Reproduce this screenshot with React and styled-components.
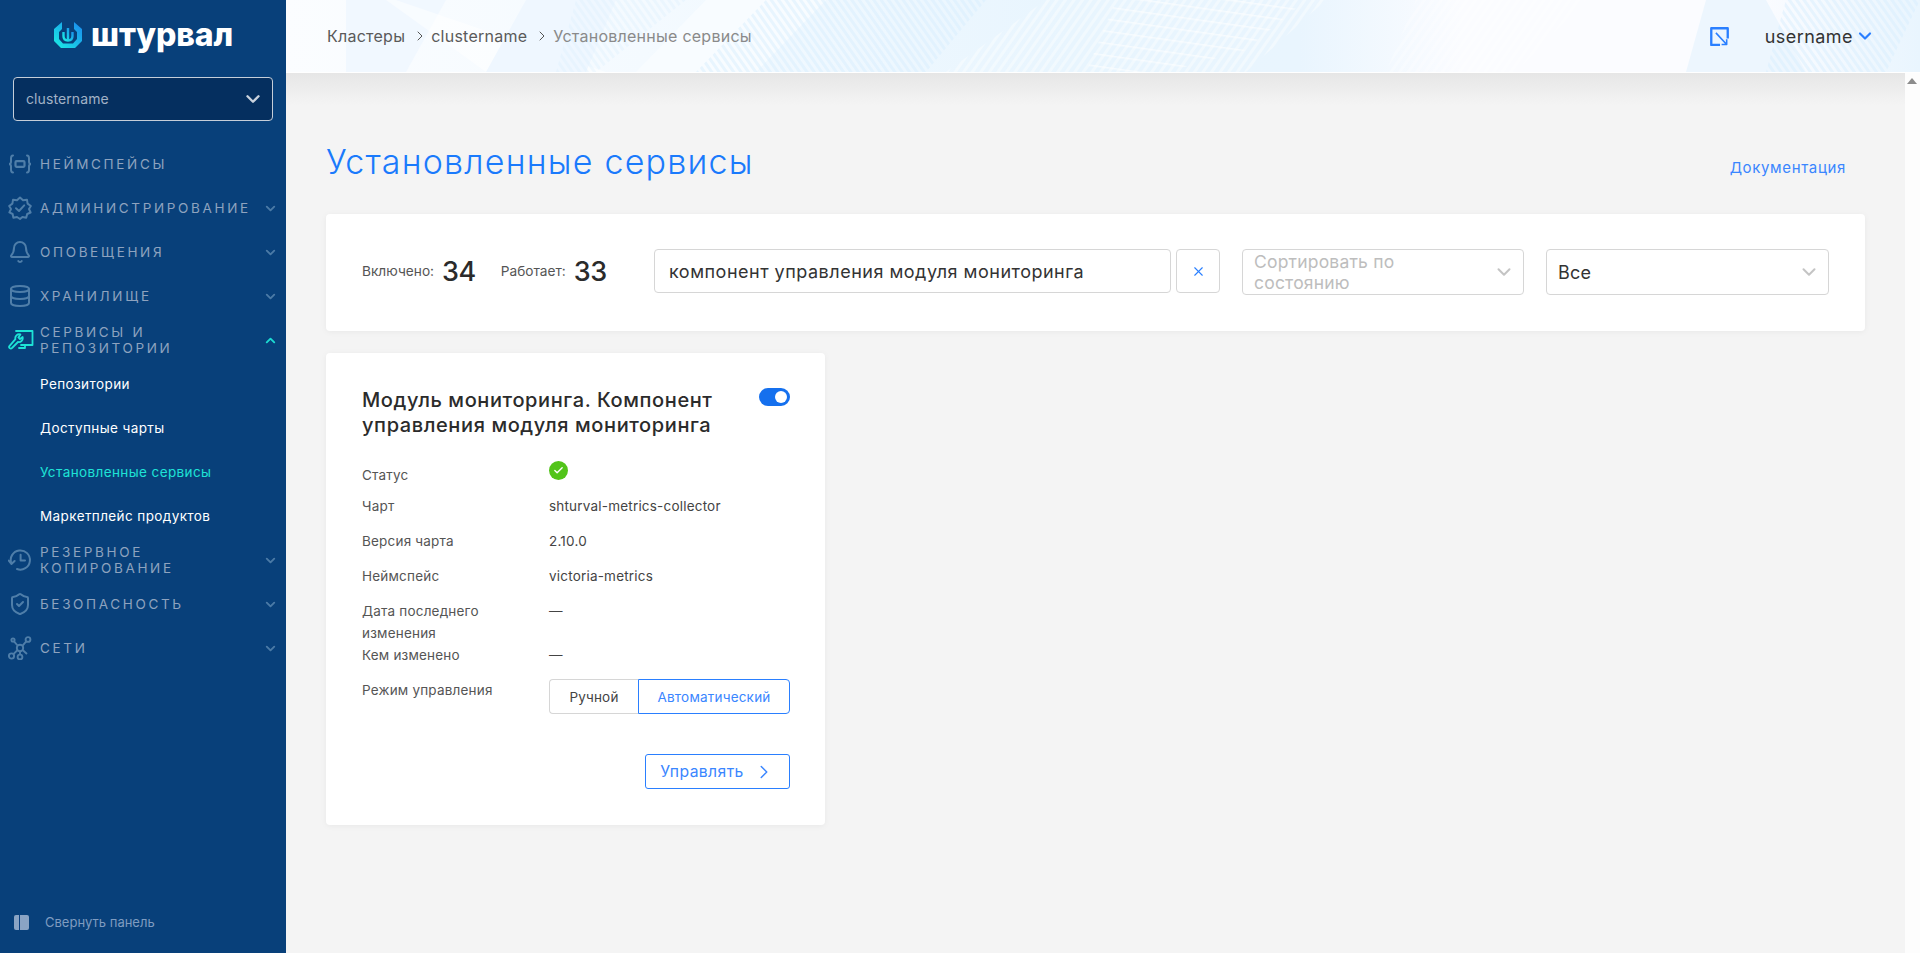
import React from 'react'
import styled, { createGlobalStyle } from 'styled-components'
import { Bell, ChevronDown, ChevronRight, ChevronUp, Database, ShieldCheck, X, Check } from 'lucide-react'

const GlobalStyle = createGlobalStyle`
    html, body {
        margin: 0;
        height: 100%;
        background: #f4f4f4;
    }
    body {
        font-family: Inter, "Noto Sans", "Liberation Sans", sans-serif;
        color: #2b2b2b;
    }
    * {
        box-sizing: border-box;
    }
`

const LogoIcon = () => (
    <svg width="28" height="26" viewBox="0 0 28 26">
        <defs>
            <linearGradient id="logoGrad" x1="1" y1="0" x2="0" y2="1">
                <stop offset="0" stopColor="#1a86ee" />
                <stop offset="1" stopColor="#1af0e4" />
            </linearGradient>
        </defs>
        <path
            fill="url(#logoGrad)"
            d="M8 0 L0 7 V19 L7 26 H21 L28 19 V7 L20 0 V7 L23 10 V17 L19 21.5 H9 L5 17 V10 L8 7 Z"
        />
        <path
            fill="none"
            stroke="url(#logoGrad)"
            strokeWidth="2.4"
            d="M9.5 10 V14 Q9.5 18.5 14 18.5 Q18.5 18.5 18.5 14 V10 M14 6 V18"
        />
    </svg>
)

const NamespaceIcon = () => (
    <svg width="24" height="24" viewBox="0 0 24 24" fill="none" stroke="currentColor" strokeWidth="2" strokeLinecap="round">
        <path d="M5 3.5 C3 3.5 3 5 3 6.5 V9.5 C3 11 2.4 12 1 12 C2.4 12 3 13 3 14.5 V17.5 C3 19 3 20.5 5 20.5" />
        <path d="M19 3.5 C21 3.5 21 5 21 6.5 V9.5 C21 11 21.6 12 23 12 C21.6 12 21 13 21 14.5 V17.5 C21 19 21 20.5 19 20.5" />
        <rect x="7.5" y="9.2" width="9" height="5.6" rx="1" strokeWidth="2.2" />
    </svg>
)

const GearCheckIcon = () => (
    <svg width="24" height="24" viewBox="0 0 24 24" fill="none" stroke="currentColor" strokeWidth="2" strokeLinejoin="round" strokeLinecap="round">
        <path d="M12 1.5 L15 4.2 L19 3.8 L19.6 7.6 L22.8 10 L21 13 L22.6 16.5 L19.2 18 L18.2 21.8 L14.4 21 L12 23 L9 21 L5.4 21.8 L4.6 18 L1.4 16.4 L3 13 L1.2 10 L4.4 7.6 L5 3.8 L9 4.2 Z" />
        <path d="M8 12.2 L11 15 L16.2 9.4" />
    </svg>
)

const ServicesIcon = () => (
    <svg width="26" height="24" viewBox="0 0 26 24" fill="none" stroke="currentColor" strokeWidth="1.8" strokeLinejoin="round" strokeLinecap="round">
        <path d="M8 3 H24.5 V17 H13" />
        <path d="M17 17 V20 H11" />
        <path d="M12.4 6.4 A4 4 0 0 0 7.4 11.2 L1.6 17.8 A1.6 1.6 0 0 0 4 20 L10 14 A4 4 0 0 0 14.6 9 L12 11 L10.4 9.4 Z" />
    </svg>
)

const BackupIcon = () => (
    <svg width="24" height="24" viewBox="0 0 24 24" fill="none" stroke="currentColor" strokeWidth="2" strokeLinecap="round" strokeLinejoin="round">
        <path d="M3.4 15.5 A9.6 9.6 0 1 1 9 21" />
        <path d="M0.8 12.6 L3.4 16 L6.6 13" />
        <path d="M12.6 6.8 V12.4 H17" />
    </svg>
)

const NetworkIcon = () => (
    <svg width="24" height="24" viewBox="0 0 24 24" fill="none" stroke="currentColor" strokeWidth="1.9">
        <circle cx="12" cy="12" r="3.2" />
        <circle cx="5" cy="4" r="1.6" />
        <circle cx="20" cy="3.5" r="2.4" />
        <circle cx="3.5" cy="20" r="2.6" />
        <circle cx="12" cy="21" r="2.4" />
        <path d="M6 5.4 L10 10 M18.4 5.2 L14.4 9.8 M9.6 14 L5.4 18.2 M12 15.2 V18.6 M14.6 14 L19 18" />
    </svg>
)

const LeaveIcon = () => (
    <svg width="19" height="19" viewBox="0 0 18 18" fill="none" stroke="#2a7fff" strokeLinejoin="round">
        <path d="M9.5 17 H1.2 V1.2 H16.8 V11" strokeWidth="2.2" />
        <path d="M5.6 5.6 L15.8 16.6 M15.8 11.6 V16.6 H11" strokeWidth="1.5" />
    </svg>
)

const navItems = [
    { title: 'Неймспейсы', icon: <NamespaceIcon /> },
    { title: 'Администрирование', icon: <GearCheckIcon />, arrow: true },
    { title: 'Оповещения', icon: <Bell size={24} strokeWidth={2} />, arrow: true },
    { title: 'Хранилище', icon: <Database size={24} strokeWidth={2} />, arrow: true },
    {
        title: 'Сервисы и репозитории',
        icon: <ServicesIcon />,
        open: true,
        arrow: true,
        children: ['Репозитории', 'Доступные чарты', 'Установленные сервисы', 'Маркетплейс продуктов'],
    },
    { title: 'Резервное копирование', icon: <BackupIcon />, arrow: true },
    { title: 'Безопасность', icon: <ShieldCheck size={24} strokeWidth={2} />, arrow: true },
    { title: 'Сети', icon: <NetworkIcon />, arrow: true },
]

const infoRows = [
    { label: 'Чарт', value: 'shturval-metrics-collector', gap: 13 },
    { label: 'Версия чарта', value: '2.10.0', gap: 13 },
    { label: 'Неймспейс', value: 'victoria-metrics', gap: 13 },
    { label: 'Дата последнего изменения', value: '—', gap: 0 },
    { label: 'Кем изменено', value: '—', gap: 13 },
]

const App = () => {
    return (
        <Layout>
            <GlobalStyle />
            <Sidebar>
                <LogoRow>
                    <LogoIcon />
                    <LogoText>штурвал</LogoText>
                </LogoRow>
                <ClusterSelect>
                    <ClusterName>clustername</ClusterName>
                    <ChevronDown size={22} strokeWidth={2.6} color="#c9d2dd" />
                </ClusterSelect>
                <Nav>
                    {navItems.map((item) => (
                        <React.Fragment key={item.title}>
                            <NavRow $open={item.open}>
                                <NavIcon>{item.icon}</NavIcon>
                                <NavLabel>{item.title}</NavLabel>
                                {item.arrow && (
                                    <NavArrow>
                                        {item.open ? (
                                            <ChevronUp size={15} strokeWidth={3} />
                                        ) : (
                                            <ChevronDown size={15} strokeWidth={3} />
                                        )}
                                    </NavArrow>
                                )}
                            </NavRow>
                            {item.children &&
                                item.children.map((child) => (
                                    <SubRow key={child} $active={child === 'Установленные сервисы'}>
                                        {child}
                                    </SubRow>
                                ))}
                        </React.Fragment>
                    ))}
                </Nav>
                <Collapse>
                    <CollapseIcon />
                    Свернуть панель
                </Collapse>
            </Sidebar>

            <Main>
                <Header>
                    <HeaderPattern viewBox="0 0 1634 72" preserveAspectRatio="none">
                        <defs>
                            <pattern id="stripes" width="7" height="7" patternUnits="userSpaceOnUse" patternTransform="rotate(35)">
                                <rect width="3" height="7" fill="#ffffff" opacity="0.4" />
                            </pattern>
                            <pattern id="stripesBlue" width="6" height="6" patternUnits="userSpaceOnUse" patternTransform="rotate(-35)">
                                <rect width="3" height="6" fill="#d8edfd" opacity="0.5" />
                            </pattern>
                            <pattern id="steps" width="60" height="12" patternUnits="userSpaceOnUse" patternTransform="rotate(8)">
                                <rect width="60" height="1.5" fill="#ffffff" opacity="0.6" />
                            </pattern>
                        </defs>
                        <polygon points="60,0 160,0 120,72 60,72" fill="#f1f8ff" />
                        <polygon points="100,0 110,0 320,72 200,72" fill="#ffffff" opacity="0.5" />
                        <polygon points="240,0 330,0 300,72 200,72" fill="#eff7ff" />
                        <polygon points="290,0 400,0 310,72 270,72" fill="url(#stripesBlue)" opacity="0.6" />
                        <polygon points="420,0 540,0 470,72 350,72" fill="#f8fcff" />
                        <polygon points="480,0 700,0 640,72 410,72" fill="url(#stripesBlue)" />
                        <polygon points="760,0 1040,0 960,72 660,72" fill="url(#stripes)" />
                        <polygon points="830,0 1020,0 960,50 880,72 800,72" fill="url(#steps)" />
                        <polygon points="1130,0 1300,0 1230,72 1100,72" fill="url(#stripes)" opacity="0.7" />
                        <polygon points="1420,0 1480,0 1520,72 1400,72" fill="#edf6fe" />
                        <polygon points="1500,0 1634,0 1600,72 1480,72" fill="url(#stripesBlue)" />
                    </HeaderPattern>
                    <Breadcrumbs>
                        <Crumb>Кластеры</Crumb>
                        <CrumbArrow size={16} strokeWidth={1.5} />
                        <Crumb>clustername</Crumb>
                        <CrumbArrow size={16} strokeWidth={1.5} />
                        <Crumb $current>Установленные сервисы</Crumb>
                    </Breadcrumbs>
                    <HeaderRight>
                        <LeaveIcon />
                        <UserName>
                            username
                            <ChevronDown size={20} strokeWidth={2.6} color="#2a7fff" />
                        </UserName>
                    </HeaderRight>
                </Header>

                <Body>
                    <Content>
                        <TitleRow>
                            <PageTitle>Установленные сервисы</PageTitle>
                            <DocLink>Документация</DocLink>
                        </TitleRow>

                        <FilterCard>
                            <Stats>
                                <StatLabel>Включено:</StatLabel>
                                <StatValue>34</StatValue>
                                <StatLabel>Работает:</StatLabel>
                                <StatValue>33</StatValue>
                            </Stats>
                            <SearchField>компонент управления модуля мониторинга</SearchField>
                            <ClearButton>
                                <X size={15} strokeWidth={1.8} />
                            </ClearButton>
                            <SelectBox $placeholder $width={282}>
                                <SelectText $placeholder>Сортировать по состоянию</SelectText>
                                <ChevronDown size={22} strokeWidth={2.2} color="#c4c4c4" />
                            </SelectBox>
                            <SelectBox $width={283}>
                                <SelectText>Все</SelectText>
                                <ChevronDown size={22} strokeWidth={2.2} color="#c4c4c4" />
                            </SelectBox>
                        </FilterCard>

                        <ServiceCard>
                            <CardTop>
                                <CardTitle>Модуль мониторинга. Компонент управления модуля мониторинга</CardTitle>
                                <Toggle />
                            </CardTop>
                            <InfoRow $gap={9}>
                                <InfoLabel $shift>Статус</InfoLabel>
                                <StatusDot>
                                    <Check size={11} strokeWidth={3} color="#ffffff" />
                                </StatusDot>
                            </InfoRow>
                            {infoRows.map((row) => (
                                <InfoRow key={row.label} $gap={row.gap}>
                                    <InfoLabel>{row.label}</InfoLabel>
                                    <InfoValue>{row.value}</InfoValue>
                                </InfoRow>
                            ))}
                            <InfoRow $gap={0}>
                                <InfoLabel>Режим управления</InfoLabel>
                                <ModeGroup>
                                    <ModeButton>Ручной</ModeButton>
                                    <ModeButton $active>Автоматический</ModeButton>
                                </ModeGroup>
                            </InfoRow>
                            <CardFooter>
                                <ManageButton>
                                    Управлять
                                    <ChevronRight size={22} strokeWidth={1.6} />
                                </ManageButton>
                            </CardFooter>
                        </ServiceCard>
                    </Content>
                    <ScrollTrack>
                        <ScrollArrow />
                    </ScrollTrack>
                </Body>
            </Main>
        </Layout>
    )
}

export default App

const Layout = styled.div`
    display: flex;
    height: 100vh;
    overflow: hidden;
`

const Sidebar = styled.aside`
    width: 286px;
    flex: none;
    display: flex;
    flex-direction: column;
    background: #08407a;
`

const LogoRow = styled.div`
    height: 77px;
    padding: 22px 0 0 54px;
    display: flex;
    align-items: flex-start;
    gap: 9px;
`

const LogoText = styled.div`
    color: #ffffff;
    font-size: 32px;
    line-height: 25px;
    font-weight: 800;
    letter-spacing: -0.1px;
`

const ClusterSelect = styled.div`
    margin-left: 13px;
    width: 260px;
    height: 44px;
    flex: none;
    padding: 0 8px 0 12px;
    display: flex;
    align-items: center;
    justify-content: space-between;
    background: #052f5f;
    border: 1px solid #c5ced9;
    border-radius: 4px;
`

const ClusterName = styled.span`
    padding-bottom: 2px;
    font-size: 14px;
    letter-spacing: 0.1px;
    color: #a2b2c6;
`

const Nav = styled.nav`
    margin-top: 21px;
    display: flex;
    flex-direction: column;
`

const NavRow = styled.div`
    height: 44px;
    display: flex;
    align-items: center;
    padding: 0 8px;
    color: ${(props) => (props.$open ? '#1ee3d6' : '#4f7ea9')};
`

const NavIcon = styled.span`
    width: 32px;
    flex: none;
    display: flex;
`

const NavLabel = styled.span`
    flex: 1;
    max-width: 220px;
    font-size: 13.5px;
    line-height: 16px;
    letter-spacing: 2.65px;
    text-transform: uppercase;
    color: #8ea3bf;
`

const NavArrow = styled.span`
    margin-left: auto;
    display: flex;
    opacity: 0.95;
`

const SubRow = styled.div`
    height: 44px;
    padding-left: 40px;
    display: flex;
    align-items: center;
    font-size: 13.5px;
    font-weight: 400;
    letter-spacing: 0.4px;
    color: ${(props) => (props.$active ? '#1ee3d6' : '#ffffff')};
`

const Collapse = styled.div`
    margin-top: auto;
    height: 62px;
    padding-left: 14px;
    display: flex;
    align-items: center;
    gap: 16px;
    font-size: 13px;
    color: #7f9cc0;
`

const CollapseIcon = styled.span`
    width: 15px;
    height: 15px;
    flex: none;
    border-radius: 2px;
    background: linear-gradient(90deg, #8aa4c4 0 5px, #0b4080 5px 6.5px, #8aa4c4 6.5px);
`

const Main = styled.main`
    flex: 1;
    min-width: 0;
    display: flex;
    flex-direction: column;
`

const Header = styled.header`
    position: relative;
    height: 73px;
    flex: none;
    padding: 0 45px 0 41px;
    display: flex;
    align-items: center;
    justify-content: space-between;
    border-bottom: 1px solid #ffffff;
    background: linear-gradient(90deg, #fbfdff 0%, #f4faff 22%, #e8f5fe 48%, #e9f5fe 62%, #fbfcff 72%, #fbfcff 90%, #e9f5fe 100%);
`

const HeaderPattern = styled.svg`
    position: absolute;
    inset: 0;
    width: 100%;
    height: 72px;
`

const Breadcrumbs = styled.div`
    position: relative;
    display: flex;
    align-items: center;
    gap: 3px;
    font-size: 16px;
    letter-spacing: 0.25px;
`

const Crumb = styled.span`
    color: ${(props) => (props.$current ? '#8a8a8a' : '#5a5a5a')};
`

const CrumbArrow = styled(ChevronRight)`
    margin-left: 4px;
    color: #555555;
`

const HeaderRight = styled.div`
    position: relative;
    display: flex;
    align-items: center;
    gap: 36px;
`

const UserName = styled.div`
    display: flex;
    align-items: center;
    gap: 2px;
    font-size: 18px;
    letter-spacing: 0.45px;
    color: #333333;
`

const Body = styled.div`
    flex: 1;
    min-height: 0;
    display: flex;
`

const Content = styled.div`
    flex: 1;
    min-width: 0;
    padding: 70px 40px 0;
    background: linear-gradient(#e6e6e6, #f4f4f4 32px) no-repeat;
    background-color: #f4f4f4;
`

const ScrollTrack = styled.div`
    width: 15px;
    flex: none;
    padding: 5px 0 0 2px;
    background: #fdfdfd;
`

const ScrollArrow = styled.div`
    width: 0;
    height: 0;
    border-left: 5px solid transparent;
    border-right: 5px solid transparent;
    border-bottom: 6px solid #8c8c8c;
`

const TitleRow = styled.div`
    height: 40px;
    margin-bottom: 31px;
    padding-right: 19px;
    display: flex;
    align-items: center;
    justify-content: space-between;
`

const PageTitle = styled.h1`
    margin: 0 0 2px;
    font-size: 34px;
    line-height: 38px;
    font-weight: 300;
    letter-spacing: 1.2px;
    color: #1a7afc;
`

const DocLink = styled.a`
    margin-top: 8px;
    font-size: 15px;
    letter-spacing: 0.65px;
    color: #3a86ff;
`

const FilterCard = styled.div`
    height: 117px;
    padding: 35px 36px 0;
    display: flex;
    align-items: flex-start;
    border-radius: 4px;
    background: #ffffff;
    box-shadow: 0 1px 6px rgba(0, 0, 0, 0.05);
`

const Stats = styled.div`
    width: 292px;
    height: 44px;
    flex: none;
    display: flex;
    align-items: center;
`

const StatLabel = styled.span`
    font-size: 13.7px;
    color: #555555;
    margin-right: 8px;
`

const StatValue = styled.span`
    font-size: 27px;
    font-weight: 500;
    letter-spacing: -0.5px;
    color: #2b2b2b;
    margin-right: 25px;
`

const SearchField = styled.div`
    flex: 1;
    height: 44px;
    padding: 0 14px;
    display: flex;
    align-items: center;
    border: 1px solid #d6d6d6;
    border-radius: 4px;
    font-size: 18px;
    letter-spacing: 0.5px;
    color: #333333;
`

const ClearButton = styled.div`
    width: 44px;
    height: 44px;
    flex: none;
    margin-left: 5px;
    display: flex;
    align-items: center;
    justify-content: center;
    border: 1px solid #d6d6d6;
    border-radius: 4px;
    color: #2a7fff;
`

const SelectBox = styled.div`
    width: ${(props) => props.$width}px;
    height: 46px;
    flex: none;
    margin-left: 22px;
    padding: 0 8px 0 11px;
    display: flex;
    align-items: center;
    justify-content: space-between;
    border: 1px solid #d6d6d6;
    border-radius: 4px;
`

const SelectText = styled.span`
    max-width: 190px;
    font-size: ${(props) => (props.$placeholder ? '17.5px' : '18px')};
    line-height: 21px;
    letter-spacing: 0.2px;
    color: ${(props) => (props.$placeholder ? '#bdbdbd' : '#333333')};
`

const ServiceCard = styled.div`
    width: 499px;
    height: 472px;
    margin-top: 22px;
    padding: 35px 35px 0 36px;
    border-radius: 4px;
    background: #ffffff;
    box-shadow: 0 1px 6px rgba(0, 0, 0, 0.05);
`

const CardTop = styled.div`
    display: flex;
    justify-content: space-between;
    align-items: flex-start;
    margin-bottom: 23px;
`

const CardTitle = styled.h2`
    margin: 0;
    width: 360px;
    font-size: 20px;
    line-height: 25px;
    font-weight: 500;
    letter-spacing: 0.6px;
    color: #2b2b2b;
`

const Toggle = styled.div`
    position: relative;
    width: 31px;
    height: 18px;
    flex: none;
    border-radius: 9px;
    background: #1570ee;

    &::after {
        content: '';
        position: absolute;
        top: 3px;
        right: 3px;
        width: 12px;
        height: 12px;
        border-radius: 50%;
        background: #ffffff;
    }
`

const InfoRow = styled.div`
    display: grid;
    grid-template-columns: 187px 1fr;
    margin-bottom: ${(props) => props.$gap}px;
    font-size: 13.5px;
    line-height: 22px;
    letter-spacing: 0.2px;
`

const InfoLabel = styled.div`
    color: #555555;
    padding-top: ${(props) => (props.$shift ? '3px' : '0')};
`

const InfoValue = styled.div`
    color: #444444;
`

const StatusDot = styled.span`
    width: 19px;
    height: 19px;
    display: flex;
    align-items: center;
    justify-content: center;
    border-radius: 50%;
    background: #52c41a;
`

const ModeGroup = styled.div`
    display: flex;
    height: 35px;
`

const ModeButton = styled.div`
    display: flex;
    align-items: center;
    justify-content: center;
    width: ${(props) => (props.$active ? '152px' : '89px')};
    border: 1px solid ${(props) => (props.$active ? '#2a7fff' : '#d6d6d6')};
    border-radius: ${(props) => (props.$active ? '0 4px 4px 0' : '4px 0 0 4px')};
    border-right-width: ${(props) => (props.$active ? '1px' : '0')};
    font-size: 13.5px;
    color: ${(props) => (props.$active ? '#3a86ff' : '#444444')};
`

const CardFooter = styled.div`
    margin-top: 40px;
    display: flex;
    justify-content: flex-end;
`

const ManageButton = styled.div`
    width: 145px;
    height: 35px;
    display: flex;
    align-items: center;
    justify-content: center;
    gap: 9px;
    border: 1px solid #2a7fff;
    border-radius: 3px;
    font-size: 15.7px;
    letter-spacing: 0.4px;
    color: #3a86ff;
`
